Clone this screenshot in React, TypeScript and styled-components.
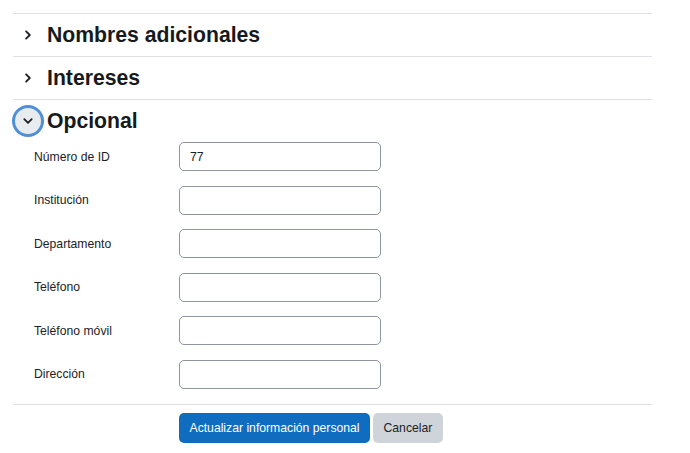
import styled, { createGlobalStyle } from "styled-components";

const GlobalStyle = createGlobalStyle`
  body {
    margin: 0;
    background: #fff;
    font-family: "Liberation Sans", Arial, sans-serif;
    color: #1d2125;
  }
`;

const Page = styled.div`
  width: 639px;
  padding: 13px 0 0 13px;
`;

const Section = styled.section`
  border-top: 1px solid #dee2e6;
`;

const Header = styled.div`
  height: 42px;
  display: flex;
  align-items: center;
  gap: 6px;
`;

const Toggle = styled.span<{ $open?: boolean }>`
  width: 26px;
  height: 26px;
  margin-left: 2px;
  border-radius: 50%;
  display: flex;
  align-items: center;
  justify-content: center;
  background: ${(p) => (p.$open ? "#e9ecef" : "transparent")};
  box-shadow: ${(p) => (p.$open ? "0 0 0 3px #4e8fd8" : "none")};
  color: #1d2125;
`;

const Title = styled.h3`
  margin: 0;
  font-size: 21.2px;
  font-weight: 700;
  line-height: 1;
  color: #161a1d;
`;

const Form = styled.div`
  display: flex;
  flex-direction: column;
  gap: 14.5px;
  padding-bottom: 15px;
`;

const Row = styled.div`
  display: flex;
  align-items: center;
`;

const Label = styled.label`
  width: 145px;
  padding-left: 21px;
  font-size: 12.2px;
  color: #1d2125;
`;

const Input = styled.input`
  box-sizing: border-box;
  width: 202px;
  height: 29px;
  padding: 0 10px;
  border: 1px solid #8f959e;
  border-radius: 5px;
  font-family: inherit;
  font-size: 12.2px;
  color: #1d2125;
  background: #fff;
  outline: none;
`;

const Footer = styled.div`
  border-top: 1px solid #dee2e6;
  padding: 8px 0 0 166px;
  display: flex;
  gap: 3px;
`;

const Button = styled.button<{ $primary?: boolean }>`
  height: 30px;
  padding: 0 10.5px;
  border: none;
  border-radius: 5px;
  font-family: inherit;
  font-size: 12.2px;
  background: ${(p) => (p.$primary ? "#0f6cbf" : "#ced4da")};
  color: ${(p) => (p.$primary ? "#fff" : "#1d2125")};
  cursor: pointer;
`;

const Chevron = ({ down }: { down?: boolean }) => (
  <svg width="10" height="10" viewBox="0 0 10 10" fill="none">
    <path
      d={down ? "M1.3 3.1 L5 6.8 L8.7 3.1" : "M3.1 1.3 L6.8 5 L3.1 8.7"}
      stroke="currentColor"
      strokeWidth="1.8"
      strokeLinecap="round"
      strokeLinejoin="round"
    />
  </svg>
);

const fields = [
  { label: "Número de ID", value: "77" },
  { label: "Institución", value: "" },
  { label: "Departamento", value: "" },
  { label: "Teléfono", value: "" },
  { label: "Teléfono móvil", value: "" },
  { label: "Dirección", value: "" },
];

export default function App() {
  return (
    <Page>
      <GlobalStyle />
      <Section>
        <Header>
          <Toggle>
            <Chevron />
          </Toggle>
          <Title>Nombres adicionales</Title>
        </Header>
      </Section>
      <Section>
        <Header>
          <Toggle>
            <Chevron />
          </Toggle>
          <Title>Intereses</Title>
        </Header>
      </Section>
      <Section>
        <Header>
          <Toggle $open>
            <Chevron down />
          </Toggle>
          <Title>Opcional</Title>
        </Header>
        <Form>
          {fields.map((f) => (
            <Row key={f.label}>
              <Label>{f.label}</Label>
              <Input defaultValue={f.value} />
            </Row>
          ))}
        </Form>
      </Section>
      <Footer>
        <Button $primary>Actualizar información personal</Button>
        <Button>Cancelar</Button>
      </Footer>
    </Page>
  );
}
